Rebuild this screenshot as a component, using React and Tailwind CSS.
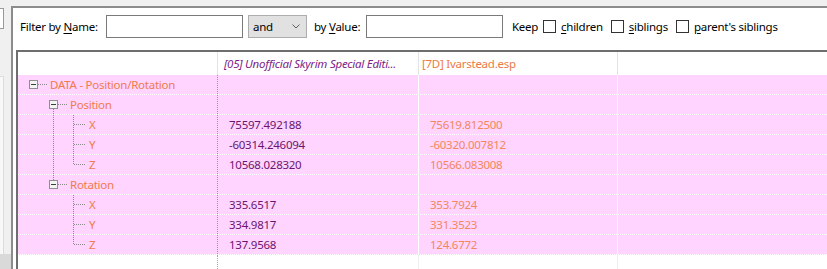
import React from "react";

const PURPLE = "text-[#6a1470]";
const ORANGE = "text-[#f07a4c]";
const ORANGE2 = "text-[#f2875c]";

function Box({ x }) {
  return (
    <g>
      <rect x={x + 0.5} y={5.5} width={8} height={8} fill="#f4f4f4" stroke="#8e8e8e" shapeRendering="crispEdges" />
      <line x1={x + 2} y1={9.5} x2={x + 7} y2={9.5} stroke="#3c3c3c" shapeRendering="crispEdges" />
    </g>
  );
}

const dot = { stroke: "#8a8a8a", strokeDasharray: "1 1", shapeRendering: "crispEdges" };

function Lines({ kind }) {
  return (
    <svg width="72" height="19" className="shrink-0 block">
      {kind === "root" && (
        <>
          <line x1={20} y1={9.5} x2={29} y2={9.5} {...dot} />
          <Box x={11} />
        </>
      )}
      {kind === "group1" && (
        <>
          <line x1={35.5} y1={14} x2={35.5} y2={19} {...dot} />
          <line x1={40} y1={9.5} x2={49} y2={9.5} {...dot} />
          <Box x={31} />
        </>
      )}
      {kind === "group2" && (
        <>
          <line x1={35.5} y1={0} x2={35.5} y2={5} {...dot} />
          <line x1={40} y1={9.5} x2={49} y2={9.5} {...dot} />
          <Box x={31} />
        </>
      )}
      {(kind === "leaf1" || kind === "leaf1last") && (
        <line x1={35.5} y1={0} x2={35.5} y2={19} {...dot} />
      )}
      {(kind === "leaf1" || kind === "leaf2") && (
        <line x1={55.5} y1={0} x2={55.5} y2={19} {...dot} />
      )}
      {(kind === "leaf1last" || kind === "leaf2last") && (
        <line x1={55.5} y1={0} x2={55.5} y2={10} {...dot} />
      )}
      {kind.startsWith("leaf") && <line x1={56} y1={9.5} x2={68} y2={9.5} {...dot} />}
    </svg>
  );
}

const rows = [
  { kind: "root", label: "DATA - Position/Rotation", indent: 32, a: "", b: "" },
  { kind: "group1", label: "Position", indent: 52, a: "", b: "" },
  { kind: "leaf1", label: "X", indent: 71, a: "75597.492188", b: "75619.812500" },
  { kind: "leaf1", label: "Y", indent: 71, a: "-60314.246094", b: "-60320.007812" },
  { kind: "leaf1last", label: "Z", indent: 71, a: "10568.028320", b: "10566.083008" },
  { kind: "group2", label: "Rotation", indent: 52, a: "", b: "" },
  { kind: "leaf2", label: "X", indent: 71, a: "335.6517", b: "353.7924" },
  { kind: "leaf2", label: "Y", indent: 71, a: "334.9817", b: "331.3523" },
  { kind: "leaf2last", label: "Z", indent: 71, a: "137.9568", b: "124.6772" },
];

function Check({ label, u }) {
  return (
    <div className="flex items-center">
      <div className="w-[13px] h-[13px] border border-[#333333] bg-white mr-[5px]" />
      <span>
        <span className="underline underline-offset-2">{u}</span>
        {label}
      </span>
    </div>
  );
}

export default function App() {
  return (
    <div
      className="w-[827px] h-[269px] bg-[#f0f0f0] flex overflow-hidden text-[11.5px] tracking-[-0.25px] text-black"
      style={{ fontFamily: '"Noto Sans", "Open Sans", sans-serif' }}
    >
      {/* left strip */}
      <div className="w-[11px] shrink-0 flex flex-col">
        <div className="h-[8px]" />
        <div className="w-[4px] h-[21px] bg-white border-y border-r border-[#9a9a9a]" />
        <div className="h-[47px]" />
        <div className="w-[4px] flex-1 bg-[#f8f8f8] border-t border-r border-[#dcdcdc]" />
        <div className="h-[15px] bg-[#d9d9d9]" />
      </div>

      {/* main panel */}
      <div className="flex-1 mt-[6px] border-l-2 border-t-2 border-[#8c8c8c] bg-white flex flex-col min-w-0">
        {/* filter row */}
        <div className="h-[42px] flex items-start pt-[7px] pl-[7px] shrink-0">
          <div className="h-[23px] flex items-center whitespace-nowrap">
            <span className="w-[86px]">
              Filter by <span className="underline underline-offset-2">N</span>ame:
            </span>
            <div className="w-[137px] h-[23px] border border-[#7a7a7a] bg-white" />
            <div className="ml-[5px] w-[59px] h-[23px] border border-[#adadad] bg-[#e1e1e1] flex items-center justify-between pl-[4px] pr-[6px]">
              <span>and</span>
              <svg width="8" height="5" viewBox="0 0 8 5">
                <path d="M0.5 0.5 L4 4 L7.5 0.5" fill="none" stroke="#606060" strokeWidth="1" />
              </svg>
            </div>
            <span className="ml-[7px] w-[52px]">
              by <span className="underline underline-offset-2">V</span>alue:
            </span>
            <div className="w-[137px] h-[23px] border border-[#7a7a7a] bg-white" />
            <span className="ml-[9px] w-[31px]">Keep</span>
            <div className="flex items-center gap-[8px]">
              <Check u="c" label="hildren" />
              <Check u="s" label="iblings" />
              <Check u="p" label="arent's siblings" />
            </div>
          </div>
        </div>

        {/* tree */}
        <div className="flex-1 ml-[3px] border-l-2 border-t-2 border-[#6e6e6e] flex flex-col min-h-0">
          {/* header */}
          <div className="h-[23px] grid grid-cols-[200px_201px_199px_1fr] shrink-0 bg-white">
            <div className="border-r border-[#e3e3e3]" />
            <div className="border-r border-[#e3e3e3] flex items-center pl-[6px] italic text-[#7d1d87] whitespace-nowrap overflow-hidden">
              [05] Unofficial Skyrim Special Editi...
            </div>
            <div className="border-r border-[#e3e3e3] flex items-center pl-[3px] text-[#ec7a45] whitespace-nowrap">
              [7D] Ivarstead.esp
            </div>
            <div />
          </div>
          {rows.map((r, i) => (
            <div
              key={i}
              className="h-[20px] grid grid-cols-[200px_201px_199px_1fr] shrink-0 bg-[#ffd4ff] border-b border-dotted border-white"
            >
              <div className="border-r border-dotted border-[#9a9a9a] flex items-center whitespace-nowrap">
                <Lines kind={r.kind} />
                <span className={ORANGE} style={{ marginLeft: r.indent - 72 }}>
                  {r.label}
                </span>
              </div>
              <div className={`border-r border-white flex items-center pl-[11px] ${PURPLE}`}>{r.a}</div>
              <div className={`border-r border-[#fff2ff] flex items-center pl-[11px] ${ORANGE2}`}>{r.b}</div>
              <div />
            </div>
          ))}
          <div className="flex-1 grid grid-cols-[200px_201px_199px_1fr] bg-white">
            <div className="border-r border-dotted border-[#a8a8a8]" />
            <div className="border-r border-[#f0f0f0]" />
            <div className="border-r border-[#f0f0f0]" />
            <div />
          </div>
        </div>
      </div>
    </div>
  );
}
